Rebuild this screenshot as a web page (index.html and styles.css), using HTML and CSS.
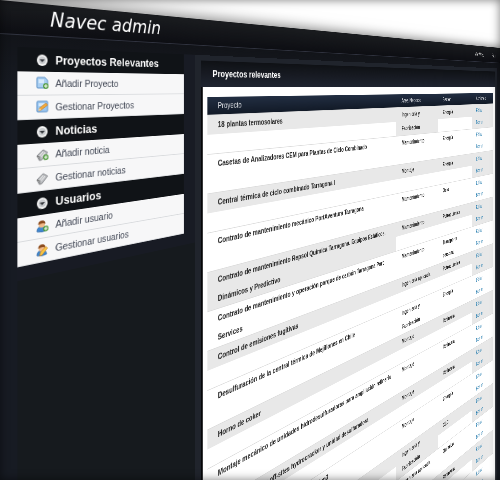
FILE: index.html
```
<!DOCTYPE html>
<html lang="es">
<head>
    <meta charset="UTF-8">
    <meta name="viewport" content="width=device-width, initial-scale=1">
    <title>Navec admin</title>
    <link rel="stylesheet" href="styles.css">
</head>
<body>
<!-- iconos compartidos -->
<svg class="sprite" aria-hidden="true">
    <symbol id="i-toggle" viewBox="0 0 14 14">
        <circle cx="7" cy="7" r="6" fill="#f4f4f4"/>
        <circle cx="7" cy="7" r="4" fill="#c9cbce"/>
        <path d="M4 6h6L7 9z" fill="#33363b"/>
    </symbol>
    <symbol id="i-add" viewBox="0 0 14 14">
        <path d="M1 2q0-1 1-1h8l3 3v7q0 1-1 1H2q-1 0-1-1z" fill="#a9cff2" stroke="#5a8fc6"/>
        <path d="M3 3h6v4H3z" fill="#d6eafc"/>
        <circle cx="11" cy="10" r="3" fill="#4f9a3a"/>
        <path d="M9 10h4M11 8v4" stroke="#fff"/>
    </symbol>
    <symbol id="i-edit" viewBox="0 0 14 14">
        <path d="M1 2q0-1 1-1h10q1 0 1 1v9q0 1-1 1H2q-1 0-1-1z" fill="#9cc8f2" stroke="#5a8fc6"/>
        <path d="M3 3h8v3H3z" fill="#d6eafc"/>
        <path d="M3 11l1-3 7-5 2 2-7 5z" fill="#f2a93b" stroke="#c47a1e" stroke-width=".6"/>
        <path d="M3 11l1-3 1.600 2z" fill="#f7e3c0"/>
    </symbol>
    <symbol id="i-news" viewBox="0 0 14 14">
        <path d="M1 8l7-6 5 3-6 7-3 1z" fill="#bfc1c4" stroke="#85878b"/>
        <path d="M4 8l4-4M6 9l4-4" stroke="#f2f2f2"/>
        <path d="M1 8l3 1v3" fill="none" stroke="#777"/>
    </symbol>
    <symbol id="i-plus" viewBox="0 0 14 14">
        <circle cx="11" cy="10" r="3" fill="#4f9a3a"/>
        <path d="M9 10h4M11 8v4" stroke="#fff"/>
    </symbol>
    <symbol id="i-user" viewBox="0 0 14 14">
        <path d="M1 12q0-5 5-5t6 5q-5 2-11 0z" fill="#3f86cf" stroke="#2a5f9c" stroke-width=".6"/>
        <circle cx="6.500" cy="5" r="3.500" fill="#f0b987"/>
        <path d="M2.500 5q0-4 4-4t4 4Q8 3 2.500 5z" fill="#8a4a1c"/>
    </symbol>
    <symbol id="i-pencil" viewBox="0 0 14 14">
        <path d="M4 13l1-4 6-5 2 2-6 6z" fill="#f7c443" stroke="#c47a1e" stroke-width=".6"/>
    </symbol>
</svg>

<div class="page">
    <header class="header">
        <h1>Navec admin</h1>
        <nav class="top-links"><a href="#">Ver Web</a><a href="#">Salir</a></nav>
    </header>

    <div class="columns">
        <aside class="sidebar">
            <nav class="menu">
                <h2><svg><use href="#i-toggle"/></svg>Proyectos Relevantes</h2>
                <a href="#"><svg><use href="#i-add"/></svg>Añadir Proyecto</a>
                <a href="#"><svg><use href="#i-edit"/></svg>Gestionar Proyectos</a>
                <h2><svg><use href="#i-toggle"/></svg>Noticias</h2>
                <a href="#"><svg><use href="#i-news"/><use href="#i-plus"/></svg>Añadir noticia</a>
                <a href="#"><svg><use href="#i-news"/></svg>Gestionar noticias</a>
                <h2><svg><use href="#i-toggle"/></svg>Usuarios</h2>
                <a href="#"><svg><use href="#i-user"/><use href="#i-plus"/></svg>Añadir usuario</a>
                <a href="#"><svg><use href="#i-user"/><use href="#i-pencil"/></svg>Gestionar usuarios</a>
            </nav>
        </aside>

        <main class="panel">
            <h2 class="panel-title">Proyectos relevantes</h2>
            <div class="panel-body">
                <table class="projects">
                    <colgroup>
                        <col>
                        <col class="col-area">
                        <col class="col-sector">
                        <col class="col-actions">
                    </colgroup>
                    <thead>
                    <tr><th>Proyecto</th><th>Area Negocio</th><th>Sector</th><th>Acciones</th></tr>
                    </thead>
                    <tbody>
                    <tr>
                        <td><div>18 plantas termosolares</div></td>
                        <td><div>Ingeniería y<br>Fabricación</div></td>
                        <td><div>Energía</div></td>
                        <td><div><a href="#">Editar</a><a href="#">Borrar</a></div></td>
                    </tr>
                    <tr>
                        <td><div>Casetas de Analizadores CEM para Plantas de Ciclo Combinado</div></td>
                        <td><div>Mantenimiento</div></td>
                        <td><div>Energía</div></td>
                        <td><div><a href="#">Editar</a><a href="#">Borrar</a></div></td>
                    </tr>
                    <tr>
                        <td><div>Central térmica de ciclo combinado Tarragona I</div></td>
                        <td><div>Montaje</div></td>
                        <td><div>Energía</div></td>
                        <td><div><a href="#">Editar</a><a href="#">Borrar</a></div></td>
                    </tr>
                    <tr>
                        <td><div>Contrato de mantenimiento mecánico PortAventura Tarragona</div></td>
                        <td><div>Mantenimiento</div></td>
                        <td><div>Ocio</div></td>
                        <td><div><a href="#">Editar</a><a href="#">Borrar</a></div></td>
                    </tr>
                    <tr>
                        <td><div>Contrato de mantenimiento Repsol Química Tarragona. Equipos Estáticos,<br>Dinámicos y Predictivo</div></td>
                        <td><div>Mantenimiento</div></td>
                        <td><div>Petroquímica</div></td>
                        <td><div><a href="#">Editar</a><a href="#">Borrar</a></div></td>
                    </tr>
                    <tr>
                        <td><div>Contrato de mantenimiento y operación parque de carbón Tarragona Port<br>Services</div></td>
                        <td><div>Mantenimiento</div></td>
                        <td><div>Transporte<br>personal</div></td>
                        <td><div><a href="#">Editar</a><a href="#">Borrar</a></div></td>
                    </tr>
                    <tr>
                        <td><div>Control de emisiones fugitivas</div></td>
                        <td><div>Ingeniería aplicada</div></td>
                        <td><div>Petroquímica</div></td>
                        <td><div><a href="#">Editar</a><a href="#">Borrar</a></div></td>
                    </tr>
                    <tr>
                        <td><div>Desulfuración de la central térmica de Mejillones en Chile</div></td>
                        <td><div>Ingeniería y<br>Fabricación</div></td>
                        <td><div>Energía</div></td>
                        <td><div><a href="#">Editar</a><a href="#">Borrar</a></div></td>
                    </tr>
                    <tr>
                        <td><div>Horno de coker</div></td>
                        <td><div>Montaje</div></td>
                        <td><div>Refinería</div></td>
                        <td><div><a href="#">Editar</a><a href="#">Borrar</a></div></td>
                    </tr>
                    <tr>
                        <td><div>Montaje mecánico de unidades hidrodesulfuradoras para ampliación refinería</div></td>
                        <td><div>Montaje</div></td>
                        <td><div>Refinería</div></td>
                        <td><div><a href="#">Editar</a><a href="#">Borrar</a></div></td>
                    </tr>
                    <tr>
                        <td><div>Montaje mecánico off-sites hydrocracker y unidad desulfuradora</div></td>
                        <td><div>Montaje</div></td>
                        <td><div>Refinería</div></td>
                        <td><div><a href="#">Editar</a><a href="#">Borrar</a></div></td>
                    </tr>
                    <tr>
                        <td><div>Montaje de tanques de gasoil de 400.000 m3</div></td>
                        <td><div>Montaje</div></td>
                        <td><div>Energía</div></td>
                        <td><div><a href="#">Editar</a><a href="#">Borrar</a></div></td>
                    </tr>
                    <tr>
                        <td><div></div></td>
                        <td><div>Ingeniería y<br>Fabricación</div></td>
                        <td><div>CLC</div></td>
                        <td><div><a href="#">Editar</a><a href="#">Borrar</a></div></td>
                    </tr>
                    <tr>
                        <td><div></div></td>
                        <td><div>Ingeniería aplicada</div></td>
                        <td><div>Química</div></td>
                        <td><div><a href="#">Editar</a><a href="#">Borrar</a></div></td>
                    </tr>
                    <tr>
                        <td><div></div></td>
                        <td><div></div></td>
                        <td><div>Refinería</div></td>
                        <td><div><a href="#">Editar</a><a href="#">Borrar</a></div></td>
                    </tr>
                    <tr>
                        <td><div></div></td>
                        <td><div></div></td>
                        <td><div></div></td>
                        <td><div><a href="#">Editar</a><a href="#">Borrar</a></div></td>
                    </tr>
                    </tbody>
                </table>
            </div>
        </main>
    </div>
</div>
<div class="vignette"></div>
</body>
</html>
```
FILE: styles.css
```
* {
    box-sizing: border-box;
}

html {
    height: 100%;
}

body {
    position: relative;
    margin: 0;
    height: 100%;
    overflow: hidden;
    background: #fff;
    font-family: "Liberation Sans", Arial, sans-serif;
    font-size: 11px;
}

a {
    text-decoration: none;
}

.sprite {
    display: none;
}

/* the whole admin turns away to the right, horizon on the panel title */
.page {
    display: flex;
    flex-direction: column;
    width: 232vw;
    min-height: 220vh;
    background: #171a22;
    box-shadow: 0 0 20px rgba(0, 0, 0, 0.6);
    transform: perspective(160px) rotateY(10deg);
    transform-origin: 0 87px;
}

.header {
    display: flex;
    justify-content: space-between;
    height: 34px;
    padding: 0 48px 0 54px;
    border-bottom: 1px solid #30333f;
    background: linear-gradient(#1a1c1f, #0d0e13);
}

.header h1 {
    margin: 0;
    color: #fff;
    font-family: "DejaVu Sans", sans-serif;
    font-size: 22px;
    font-style: italic;
    font-weight: normal;
    line-height: 32px;
}

.top-links {
    display: flex;
    gap: 36px;
    padding-top: 10px;
    line-height: 16px;
}

.top-links a {
    color: #ccc;
}

.columns {
    flex: 1;
    display: flex;
    padding: 12px 42px 0 18px;
    background: linear-gradient(#121419, #171b23 60px);
}

.sidebar {
    flex: none;
    width: 234px;
    background: #161a1e;
}

.menu {
    padding: 0 18px 14px 0;
    background: #181b24;
}

.menu h2,
.menu a {
    display: flex;
    align-items: center;
    gap: 8px;
    height: 25px;
    margin: 0;
    padding-left: 20px;
}

.menu h2 {
    background: #101317;
    color: #fff;
    font-size: 13px;
}

.menu a {
    border-bottom: 1px solid #d9dbde;
    background: #f7f7f8;
    color: #3c4250;
}

.menu svg {
    width: 14px;
    height: 14px;
}

.panel {
    flex: 1;
    padding: 7px 10px 0 10px;
    background: #20242c;
}

.panel-title {
    height: 34px;
    margin: 0;
    padding: 3px 0 0 20px;
    background: linear-gradient(#0f1115, #1f2430);
    color: #fff;
    font-size: 13px;
    line-height: 28px;
}

.panel-body {
    min-height: 100%;
    padding: 13px 10px 0 8px;
    border-left: 3px solid #050608;
    background: #fff;
}

.projects {
    width: 100%;
    border-collapse: collapse;
    table-layout: fixed;
}

.col-area {
    width: 146px;
}

.col-sector {
    width: 139px;
}

.col-actions {
    width: 100px;
}

.projects th {
    height: 23px;
    padding: 0 18px;
    border-left: 1px solid #4b5566;
    background: linear-gradient(#222e42, #121a27);
    color: #e4e6ea;
    font-weight: normal;
    text-align: left;
}

.projects th:first-child,
.projects td:first-child div {
    border-left: 0;
}

.projects td {
    height: 50px;
    padding: 0;
    border-top: 1px solid #dcdcdc;
    vertical-align: top;
}

.projects td div {
    min-height: 25px;
    padding-left: 18px;
    border-left: 1px solid #d2d2d2;
    color: #222;
    font-weight: bold;
    line-height: 25px;
    white-space: nowrap;
}

.projects tr:nth-child(odd) td div {
    background: #e8e8e8;
}

.projects td a {
    display: block;
    color: #2a7fb0;
    font-weight: normal;
}

/* soft dark edge round the window */
.vignette {
    position: absolute;
    inset: 0;
    box-shadow: inset 0 0 10px rgba(0, 0, 0, 0.5);
    pointer-events: none;
}
```
